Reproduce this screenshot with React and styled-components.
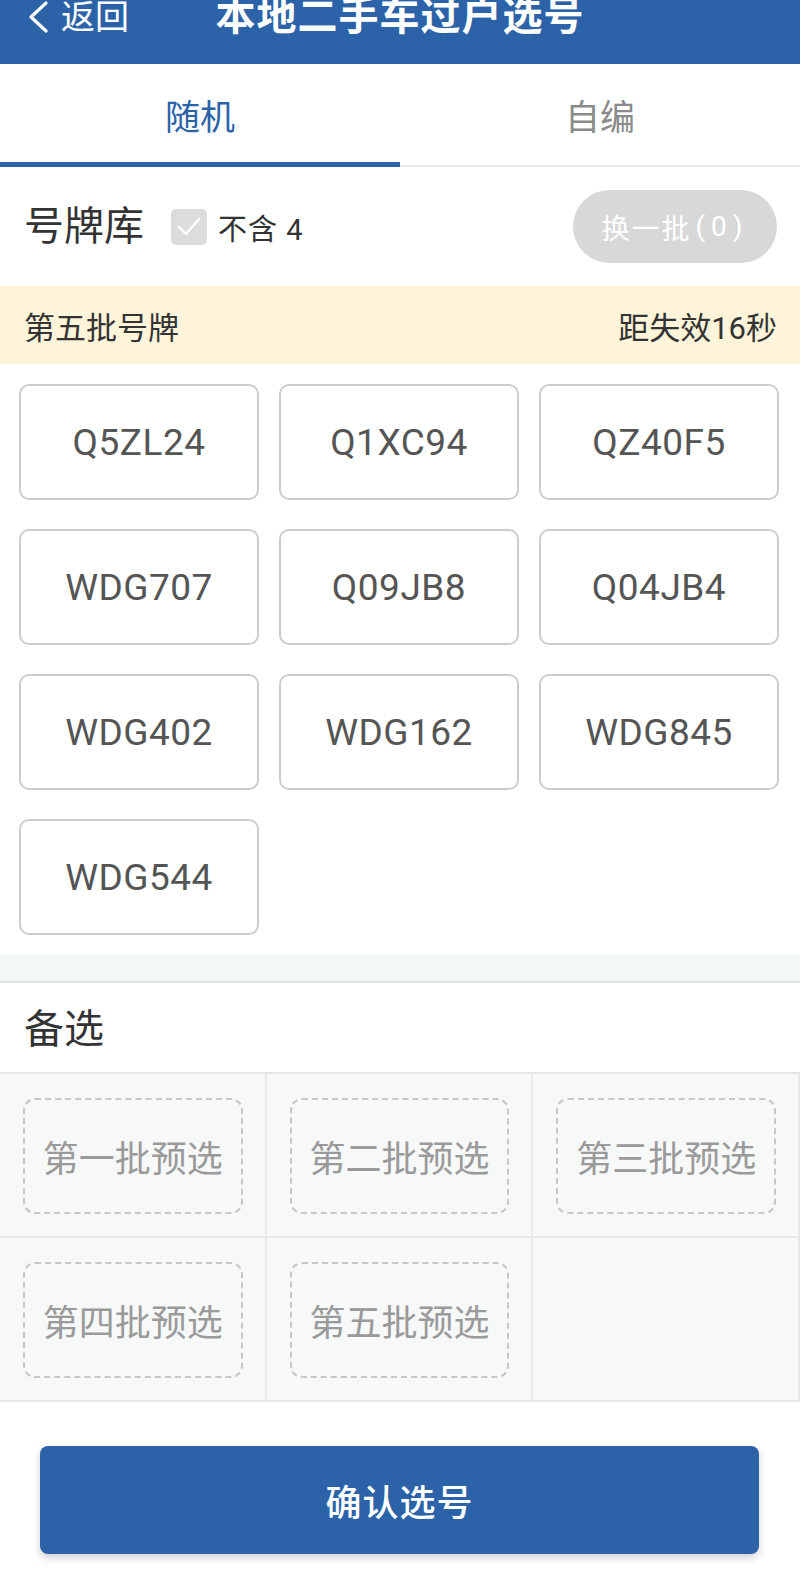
import React from 'react';
import styled, { createGlobalStyle } from 'styled-components';

const GlobalStyle = createGlobalStyle`
  html, body {
    margin: 0;
    padding: 0;
    background: #ffffff;
    font-family: Roboto, "Noto Sans CJK SC", "Noto Sans", sans-serif;
  }
  * { box-sizing: border-box; }
`;

const Page = styled.div`
  width: 800px;
  height: 1585px;
  overflow: hidden;
  background: #fff;
  display: flex;
  flex-direction: column;
`;

const Header = styled.div`
  flex: 0 0 64px;
  background: #2c63a8;
  display: grid;
  grid-template-columns: 180px 1fr 180px;
  align-items: start;
  color: #fff;
`;

const Back = styled.div`
  display: flex;
  align-items: center;
  gap: 12px;
  padding-left: 27px;
  height: 34px;
  font-size: 34px;
  line-height: 34px;
`;

const Title = styled.div`
  text-align: center;
  font-size: 40px;
  font-weight: 700;
  line-height: 34px;
  letter-spacing: 1px;
`;

const Tabs = styled.div`
  display: flex;
  flex: 0 0 103px;
  border-bottom: 2px solid #e6e6e6;
`;

const Tab = styled.div`
  flex: 1;
  display: flex;
  align-items: center;
  justify-content: center;
  font-size: 35px;
  color: ${p => (p.$active ? '#2c63a8' : '#8a8a8a')};
  border-bottom: 5px solid ${p => (p.$active ? '#2c63a8' : 'transparent')};
  margin-bottom: -2px;
  padding-top: 3px;
`;

const LibraryBar = styled.div`
  display: flex;
  align-items: center;
  flex: 0 0 119px;
  padding: 0 23px 0 24px;
`;

const SectionTitle = styled.div`
  font-size: 40px;
  color: #333;
  line-height: 1;
`;

const Check = styled.div`
  width: 36px;
  height: 36px;
  border-radius: 5px;
  background: #dcdcdc;
  display: flex;
  align-items: center;
  justify-content: center;
  margin-left: 27px;
  margin-right: 11px;
`;

const CheckLabel = styled.div`
  font-size: 29px;
  color: #333;
  letter-spacing: 1px;
`;

const Spacer = styled.div`
  flex: 1;
`;

const RefreshButton = styled.div`
  width: 204px;
  height: 73px;
  border-radius: 37px;
  background: #d8d8d8;
  color: #fff;
  font-size: 28px;
  letter-spacing: 2px;
  display: flex;
  align-items: center;
  justify-content: center;
`;

const Paren = styled.span`
  margin: 0 4px;
`;

const Notice = styled.div`
  flex: 0 0 78px;
  background: #fdf4da;
  display: flex;
  align-items: center;
  justify-content: space-between;
  padding: 0 23px 0 24px;
  font-size: 31px;
  color: #333;
`;

const PlateGrid = styled.div`
  display: grid;
  grid-template-columns: repeat(3, 240px);
  column-gap: 20px;
  row-gap: 29px;
  padding: 20px 19px 20px;
`;

const Plate = styled.div`
  height: 116px;
  border: 2px solid #c9ced3;
  border-radius: 10px;
  display: flex;
  align-items: center;
  justify-content: center;
  font-size: 37px;
  color: #555;
  letter-spacing: 0.5px;
`;

const Band = styled.div`
  flex: 0 0 28px;
  background: #f3f7f7;
  border-bottom: 2px solid #e2e2e2;
`;

const AltTitleRow = styled.div`
  flex: 0 0 89px;
  display: flex;
  align-items: center;
  padding-left: 24px;
  padding-top: 4px;
`;

const AltGrid = styled.div`
  display: grid;
  grid-template-columns: repeat(3, 1fr);
  width: 800px;
  border-top: 2px solid #e6e6e6;
`;

const AltCell = styled.div`
  height: 164px;
  background: #f7f8f8;
  border-right: 2px solid #e8e8e8;
  border-bottom: 2px solid #e8e8e8;
  padding: 24px 22px 22px 23px;
  display: flex;
`;

const AltSlot = styled.div`
  flex: 1;
  border: 2px dashed #c4c8cc;
  border-radius: 12px;
  display: flex;
  align-items: center;
  justify-content: center;
  font-size: 36px;
  color: #9a9a9a;
`;

const Footer = styled.div`
  padding: 44px 41px 0 40px;
`;

const ConfirmButton = styled.div`
  height: 108px;
  border-radius: 8px;
  background: #2c63a8;
  box-shadow: 0 4px 8px rgba(0, 0, 0, 0.18);
  color: #fff;
  font-size: 36px;
  font-weight: 500;
  display: flex;
  align-items: center;
  justify-content: center;
  letter-spacing: 1px;
`;

const plates = [
  'Q5ZL24', 'Q1XC94', 'QZ40F5',
  'WDG707', 'Q09JB8', 'Q04JB4',
  'WDG402', 'WDG162', 'WDG845',
  'WDG544',
];

const alternates = ['第一批预选', '第二批预选', '第三批预选', '第四批预选', '第五批预选', null];

export default function App() {
  return (
    <Page>
      <GlobalStyle />
      <Header>
        <Back>
          <svg width="22" height="32" viewBox="0 0 22 32" fill="none">
            <path d="M19 2 L4 16 L19 30" stroke="#fff" strokeWidth="3.2" strokeLinecap="round" strokeLinejoin="round" />
          </svg>
          返回
        </Back>
        <Title>本地二手车过户选号</Title>
        <div />
      </Header>

      <Tabs>
        <Tab $active>随机</Tab>
        <Tab>自编</Tab>
      </Tabs>

      <LibraryBar>
        <SectionTitle>号牌库</SectionTitle>
        <Check>
          <svg width="26" height="22" viewBox="0 0 26 22" fill="none">
            <path d="M3 11 L10 18 L23 3" stroke="#fff" strokeWidth="2.4" strokeLinecap="round" strokeLinejoin="round" />
          </svg>
        </Check>
        <CheckLabel>不含 4</CheckLabel>
        <Spacer />
        <RefreshButton>
          换一批<Paren>(</Paren>0<Paren>)</Paren>
        </RefreshButton>
      </LibraryBar>

      <Notice>
        <span>第五批号牌</span>
        <span>距失效16秒</span>
      </Notice>

      <PlateGrid>
        {plates.map(p => (
          <Plate key={p}>{p}</Plate>
        ))}
      </PlateGrid>

      <Band />

      <AltTitleRow>
        <SectionTitle>备选</SectionTitle>
      </AltTitleRow>

      <AltGrid>
        {alternates.map((a, i) => (
          <AltCell key={i}>{a && <AltSlot>{a}</AltSlot>}</AltCell>
        ))}
      </AltGrid>

      <Footer>
        <ConfirmButton>确认选号</ConfirmButton>
      </Footer>
    </Page>
  );
}
